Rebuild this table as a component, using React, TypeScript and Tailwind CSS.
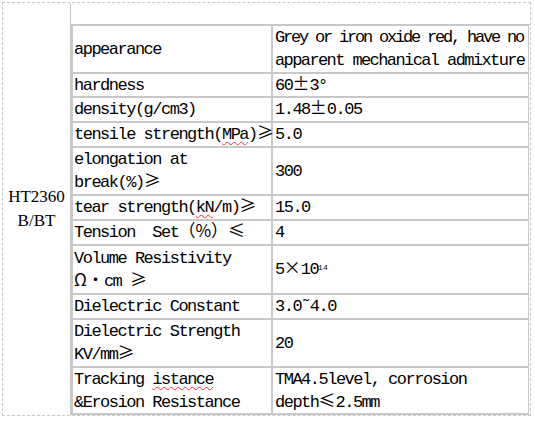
const line = 'border-[#c8c8c8]';
const wide = "font-['Noto_Sans_CJK_SC',sans-serif] tracking-normal leading-none";
const squiggle = 'underline decoration-wavy decoration-red-500 decoration-1 underline-offset-2';

function W({ children }: { children: React.ReactNode }) {
  return <span className={wide}>{children}</span>;
}

interface Row {
  h: string;
  name: React.ReactNode;
  value: React.ReactNode;
}

const rows: Row[] = [
  {
    h: 'h-[48px]',
    name: 'appearance',
    value: (
      <>
        <span className="block tracking-[-2.2px]">Grey or iron oxide red, have no</span>
        <span className="block tracking-[-1.6px]">apparent mechanical admixture</span>
      </>
    ),
  },
  { h: 'h-[24px]', name: 'hardness', value: <>60<W>±</W>3°</> },
  { h: 'h-[25px]', name: 'density(g/cm3)', value: <>1.48<W>±</W>0.05</> },
  {
    h: 'h-[25px]',
    name: (
      <>
        tensile strength(<span className={squiggle}>MPa</span>)<W>≥</W>
      </>
    ),
    value: '5.0',
  },
  {
    h: 'h-[48px]',
    name: (
      <>
        <span className="block">elongation at</span>
        <span className="block">
          break(%)<W>≥</W>
        </span>
      </>
    ),
    value: '300',
  },
  {
    h: 'h-[25px]',
    name: (
      <>
        tear strength(<span className={squiggle}>kN</span>/m)<W>≥</W>
      </>
    ),
    value: '15.0',
  },
  {
    h: 'h-[25px]',
    name: (
      <>
        Tension  Set<W>（%）≤</W>
      </>
    ),
    value: '4',
  },
  {
    h: 'h-[49px]',
    name: (
      <>
        <span className="block">Volume Resistivity</span>
        <span className="block">
          <W>Ω•</W>cm <W>≥</W>
        </span>
      </>
    ),
    value: (
      <>
        5<W>×</W>10<sup className="text-[8px] tracking-normal">14</sup>
      </>
    ),
  },
  { h: 'h-[25px]', name: 'Dielectric Constant', value: '3.0˜4.0' },
  {
    h: 'h-[48px]',
    name: (
      <>
        <span className="block">Dielectric Strength</span>
        <span className="block">
          KV/mm<W>≥</W>
        </span>
      </>
    ),
    value: '20',
  },
  {
    h: 'h-[47px]',
    name: (
      <>
        <span className="block">
          Tracking <span className={squiggle}>istance</span>
        </span>
        <span className="block">&amp;Erosion Resistance</span>
      </>
    ),
    value: (
      <>
        <span className="block">TMA4.5level, corrosion</span>
        <span className="block">
          depth<W>≤</W>2.5mm
        </span>
      </>
    ),
  },
];

export default function App() {
  return (
    <div className="w-[535px] h-[421px] bg-white text-black font-['Liberation_Mono',monospace] text-[17px] tracking-[-1.5px] leading-[23px]">
      <div className={`ml-[2px] mt-[2px] w-[529px] h-[414px] flex border border-dashed ${line}`}>
        {/* product name */}
        <div className={`w-[68px] shrink-0 border-r ${line} flex flex-col items-center justify-center leading-[24px] font-['Liberation_Serif',serif] text-[17px] tracking-normal`}>
          <span>HT2360</span>
          <span>B/BT</span>
        </div>

        {/* properties */}
        <div className="flex-1 flex flex-col">
          <div className={`h-[22px] border-b ${line}`} />
          <div className={`mr-[1px] flex-1 flex flex-col border-l-2 border-r border-t ${line}`}>
            {rows.map((r, i) => (
              <div key={i} className={`${r.h} flex border-b-2 ${line}`}>
                <div className={`w-[200px] shrink-0 pl-[1px] flex items-center whitespace-pre border-r-2 ${line}`}>
                  <div>{r.name}</div>
                </div>
                <div className="flex-1 min-w-0 pl-[2px] flex items-center whitespace-pre">
                  <div>{r.value}</div>
                </div>
              </div>
            ))}
          </div>
        </div>
      </div>
    </div>
  );
}
